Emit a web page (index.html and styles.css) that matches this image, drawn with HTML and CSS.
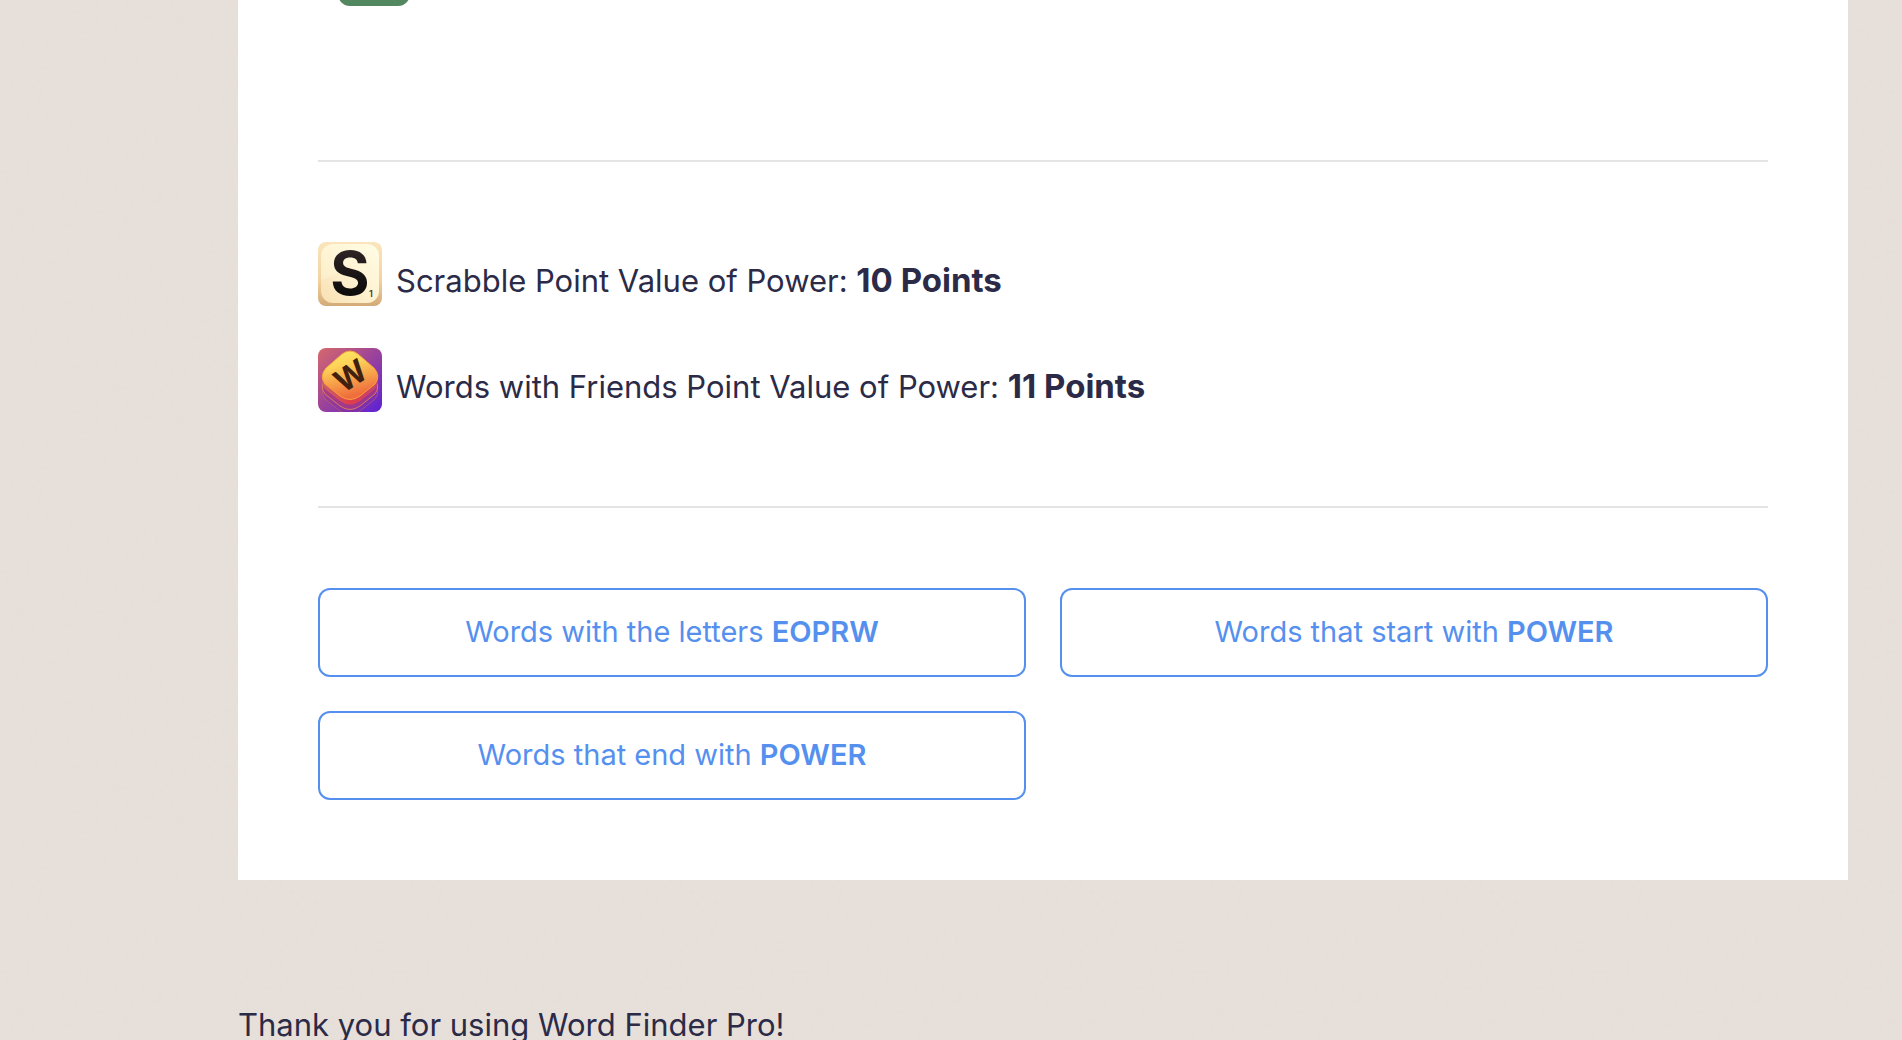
FILE: index.html
```
<!DOCTYPE html>
<html lang="en">
  <head>
    <title>Power - Word Finder Pro</title>
    <meta charset="utf-8">
    <meta name="viewport" content="width=device-width, initial-scale=1">
    <link rel="stylesheet" href="styles.css">
  </head>
  <body>
    <!-- (A) WORD CARD -->
    <main class="card">
      <div class="tile"></div>

      <!-- (A1) POINT VALUES -->
      <section class="points">
        <p class="point-row">
          <svg class="point-icon" viewBox="0 0 64 64" aria-hidden="true">
            <defs>
              <linearGradient id="s-edge" x1="0" y1="0" x2="0" y2="1">
                <stop offset="0" stop-color="#fae5bd"/>
                <stop offset=".6" stop-color="#f1d3a0"/>
                <stop offset="1" stop-color="#d3aa78"/>
              </linearGradient>
              <linearGradient id="s-face" x1="1" y1="0" x2="0" y2="1">
                <stop offset="0" stop-color="#fffce6"/>
                <stop offset=".5" stop-color="#fff2d1"/>
                <stop offset="1" stop-color="#f8dfb2"/>
              </linearGradient>
              <linearGradient id="s-ink" x1="0" y1="0" x2="0" y2="1">
                <stop offset="0" stop-color="#3a2c2c"/>
                <stop offset=".6" stop-color="#151111"/>
                <stop offset="1" stop-color="#080606"/>
              </linearGradient>
            </defs>
            <rect width="64" height="64" rx="8" fill="url(#s-edge)"/>
            <rect x="3" y="2" width="58" height="59" rx="12" fill="url(#s-face)"/>
            <path d="M3 38Q18 34 30 22T61 8V14A12 12 0 0 0 49 2H15A12 12 0 0 0 3 14Z" fill="#fffbe0" opacity=".35"/>
            <text class="s-letter" x="32" y="53" fill="url(#s-ink)">S</text>
            <text class="s-score" x="53" y="55">1</text>
          </svg>
          <span>Scrabble Point Value of Power: <strong>10 Points</strong></span>
        </p>
        <p class="point-row">
          <svg class="point-icon" viewBox="0 0 64 64" aria-hidden="true">
            <defs>
              <linearGradient id="w-back" x1="0" y1="0" x2="1" y2="1">
                <stop offset="0" stop-color="#d7686c"/>
                <stop offset=".5" stop-color="#9a429b"/>
                <stop offset="1" stop-color="#5b20d6"/>
              </linearGradient>
              <linearGradient id="w-face" x1="0" y1="0" x2=".3" y2="1">
                <stop offset="0" stop-color="#fdea67"/>
                <stop offset=".35" stop-color="#fdd458"/>
                <stop offset="1" stop-color="#ef6c3c"/>
              </linearGradient>
              <linearGradient id="w-side" x1="0" y1="0" x2="1" y2="0">
                <stop offset="0" stop-color="#c9626a"/>
                <stop offset=".5" stop-color="#e13c4a"/>
                <stop offset="1" stop-color="#c24572"/>
              </linearGradient>
              <clipPath id="w-clip"><rect width="64" height="64" rx="8"/></clipPath>
              <path id="w-tile" d="M24 6Q32 0 40 6L56 20Q63 28 57 36L42 48Q32 55 22 48L7 36Q1 28 8 20Z"/>
            </defs>
            <g clip-path="url(#w-clip)">
              <rect width="64" height="64" fill="url(#w-back)"/>
              <use href="#w-tile" y="15" fill="#8c358f" fill-opacity=".35" stroke="#d96a63" stroke-opacity=".5"/>
              <use href="#w-tile" y="10" fill="#b23a78" fill-opacity=".6" stroke="#e98a55" stroke-opacity=".8"/>
              <use href="#w-tile" y="5" fill="url(#w-side)"/>
              <use href="#w-tile" fill="url(#w-face)" stroke="#f7a13e"/>
              <text class="w-letter" x="32" y="39" transform="rotate(-33 32 27)">W</text>
            </g>
          </svg>
          <span>Words with Friends Point Value of Power: <strong>11 Points</strong></span>
        </p>
      </section>

      <!-- (A2) RELATED SEARCHES -->
      <nav class="links">
        <a class="link" href="#">Words with the letters <b>EOPRW</b></a>
        <a class="link" href="#">Words that start with <b>POWER</b></a>
        <a class="link" href="#">Words that end with <b>POWER</b></a>
      </nav>
    </main>

    <!-- (B) FOOTER -->
    <footer class="footer">
      <p>Thank you for using Word Finder Pro!</p>
    </footer>
  </body>
</html>
```
FILE: styles.css
```
/* (A) WHOLE PAGE */
* { box-sizing: border-box; }
html { overflow: hidden; }
body {
  margin: 0;
  padding: 0 54px 0 238px;
  font-family: Inter, "Liberation Sans", sans-serif;
  font-size: 31px;
  line-height: 48px;
  color: #2b2b48;
  background-color: #e7e0da;
  /* paper grain */
  background-image: url("data:image/svg+xml,%3Csvg xmlns='http://www.w3.org/2000/svg' width='400' height='400'%3E%3Cfilter id='n' x='0' y='0' width='1' height='1'%3E%3CfeTurbulence type='fractalNoise' baseFrequency='.2' numOctaves='2' stitchTiles='stitch'/%3E%3CfeColorMatrix values='0 0 0 0 .72 0 0 0 0 .68 0 0 0 0 .66 .4 0 0 0 -.16'/%3E%3C/filter%3E%3Crect width='400' height='400' filter='url(%23n)'/%3E%3C/svg%3E");
}
p { margin: 0; }

/* (B) CARD */
.card {
  display: flow-root;
  padding: 0 80px 80px;
  background: #fff;
}
.tile {
  width: 72px;
  height: 72px;
  margin: -66px 0 154px 20px;
  border-radius: 12px;
  background: #538760;
}

/* (C) POINT VALUES */
.points {
  display: flex;
  flex-direction: column;
  gap: 42px;
  padding: 80px 0 94px;
  border-top: 2px solid #e4e4e4;
  border-bottom: 2px solid #e4e4e4;
}
.point-row {
  display: flex;
  align-items: flex-end;
  gap: 14px;
  line-height: 50px;
}
.point-row strong { font-size: 33px; }
.point-icon {
  flex: none;
  width: 64px;
  height: 64px;
}
.s-letter {
  font-size: 60px;
  font-weight: 700;
  text-anchor: middle;
}
.s-score {
  font-size: 9px;
  font-weight: 600;
  text-anchor: middle;
  fill: #463a30;
}
.w-letter {
  font-size: 31px;
  font-weight: 700;
  text-anchor: middle;
  fill: #40200f;
}

/* (D) LINKS */
.links {
  display: grid;
  grid-template-columns: 1fr 1fr;
  gap: 34px;
  padding-top: 80px;
}
.link {
  padding: 19px 20px 21px;
  border: 2px solid #5590ef;
  border-radius: 12px;
  font-size: 29px;
  line-height: 45px;
  text-align: center;
  text-decoration: none;
  color: #5590ef;
}
.link b { font-weight: 600; }

/* (E) FOOTER */
.footer { padding-top: 121px; }
```
